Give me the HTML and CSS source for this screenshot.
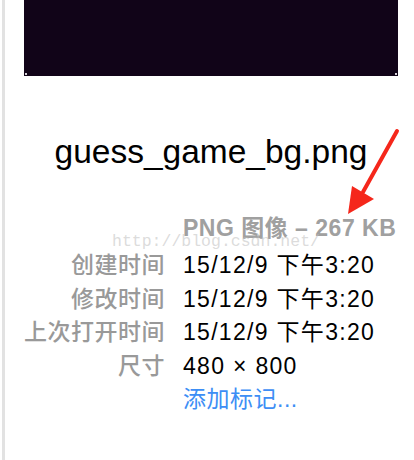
FILE: index.html
```html
<!DOCTYPE html>
<html>
<head>
<meta charset="utf-8">
<link rel="stylesheet" href="styles.css">
</head>
<body>
<div class="window">
  <div class="preview"><span class="dot dot-l"></span><span class="dot dot-r"></span></div>
  <div class="name">guess_game_bg.png</div>
  <div class="info">
    <div class="kind">PNG 图像 – 267 KB</div>
    <div class="grid">
      <div class="label">创建时间</div><div class="value">15/12/9 下午3:20</div>
      <div class="label">修改时间</div><div class="value">15/12/9 下午3:20</div>
      <div class="label">上次打开时间</div><div class="value">15/12/9 下午3:20</div>
      <div class="label">尺寸</div><div class="value">480 × 800</div>
      <div class="label"></div><div class="value link">添加标记...</div>
    </div>
  </div>
  <div class="watermark">http://blog.csdn.net/</div>
  <svg class="arrow" width="414" height="460" viewBox="0 0 414 460">
    <line x1="397" y1="131" x2="363" y2="192" stroke="#f5271b" stroke-width="4" stroke-linecap="round"/>
    <polygon points="348,214 352,186 374,199" fill="#f5271b"/>
  </svg>
</div>
</body>
</html>
```

FILE: styles.css
```css
html, body {
  margin: 0;
  padding: 0;
  background: #fff;
}
.window {
  position: relative;
  width: 412px;
  height: 460px;
  margin-left: 2px;
  border-left: 3px solid #e2e2e2;
  box-sizing: border-box;
  display: flex;
  flex-direction: column;
  font-family: "Liberation Sans", "Noto Sans CJK SC", sans-serif;
  overflow: hidden;
}
.preview {
  position: relative;
  margin-left: 19px;
  width: 374px;
  height: 76px;
  background: #110418;
  flex: none;
}
.dot {
  position: absolute;
  bottom: 1px;
  width: 2px;
  height: 2px;
  background: #d9d4dc;
}
.dot-l { left: 1px; }
.dot-r { right: 1px; }
.name {
  margin-top: 56px;
  margin-left: 19px;
  width: 374px;
  text-align: center;
  font-size: 33.5px;
  line-height: 40px;
  color: #000;
}
.info {
  margin-top: 40px;
  display: flex;
  flex-direction: column;
}
.kind {
  margin-left: 178px;
  font-size: 23px;
  line-height: 33.5px;
  height: 33.5px;
  font-weight: 600;
  letter-spacing: 0.5px;
  color: #a0a0a0;
  margin-bottom: 3.5px;
  white-space: nowrap;
}
.grid {
  display: grid;
  grid-template-columns: 160px auto;
  grid-auto-rows: 33.5px;
  column-gap: 18px;
  font-size: 23px;
  line-height: 33.5px;
}
.label {
  text-align: right;
  color: #999;
  font-weight: 500;
  letter-spacing: 0.5px;
  white-space: nowrap;
}
.value {
  color: #000;
  letter-spacing: 1.3px;
  white-space: nowrap;
}
.link {
  color: #3d8ef5;
  letter-spacing: 0.5px;
}
.watermark {
  position: absolute;
  left: 107px;
  top: 231px;
  font-family: "Liberation Mono", monospace;
  font-size: 16.5px;
  line-height: 22px;
  color: rgba(190, 190, 190, 0.55);
  white-space: nowrap;
}
.arrow {
  position: absolute;
  left: -5px;
  top: 0;
}
```
